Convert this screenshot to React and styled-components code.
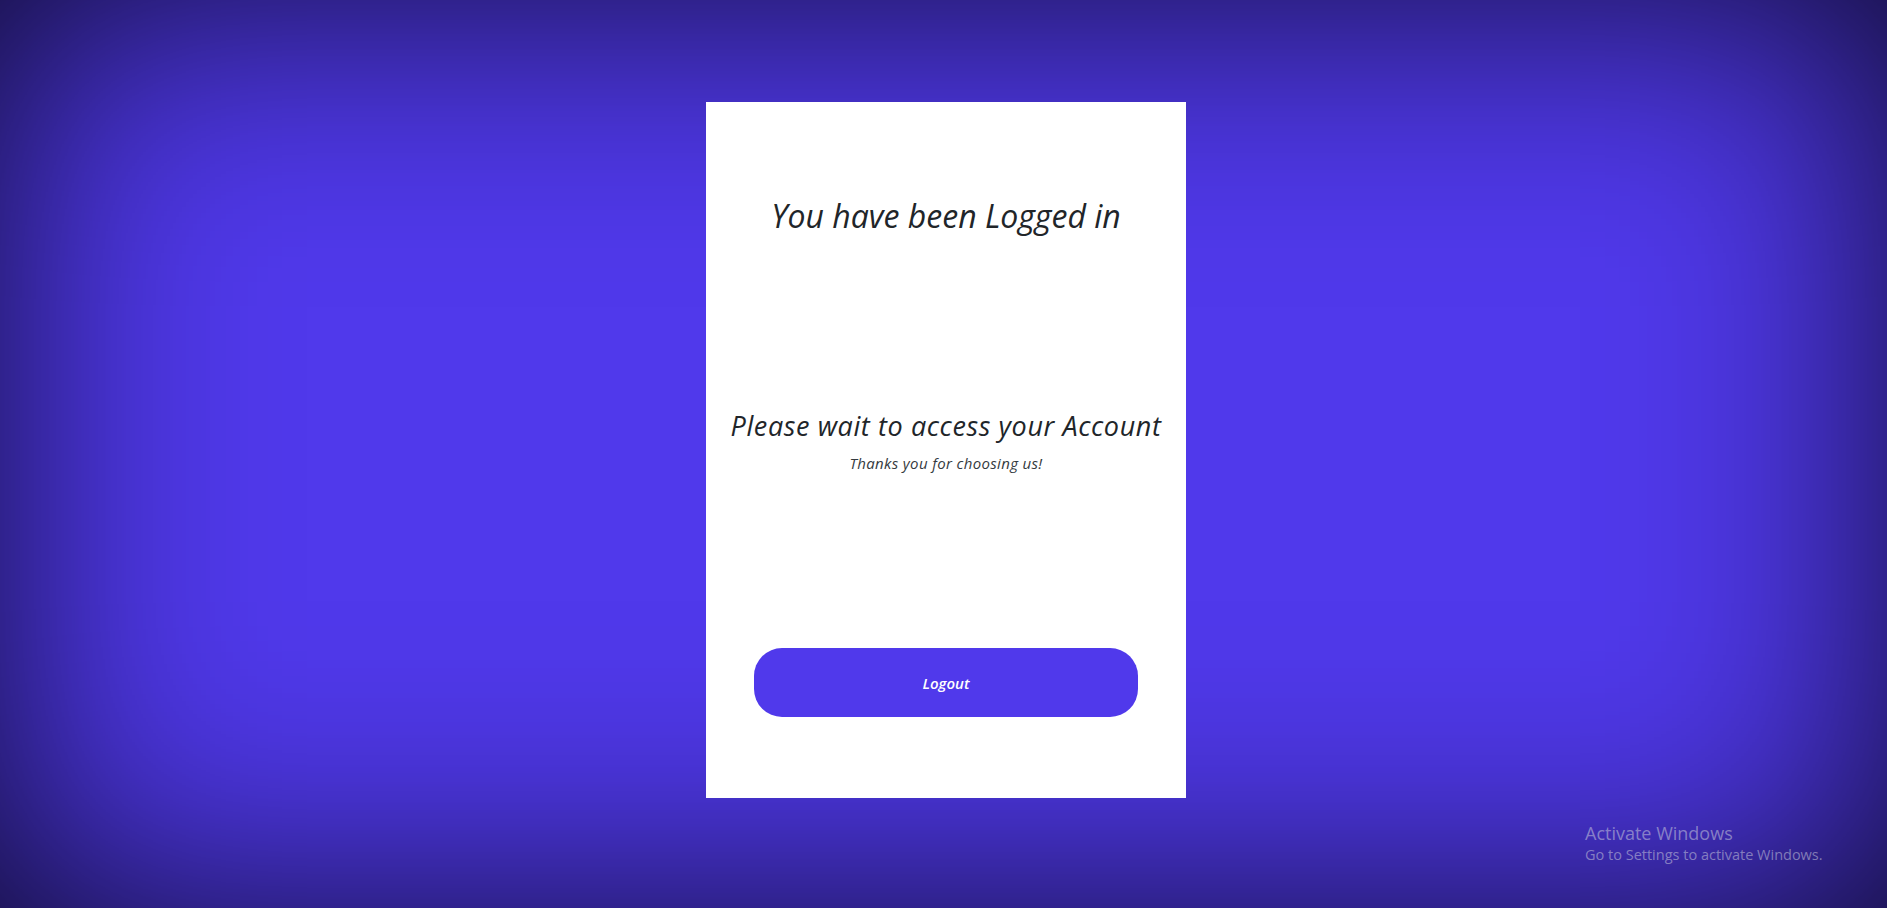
import React from "react";
import styled, { createGlobalStyle } from "styled-components";

const GlobalStyle = createGlobalStyle`
  * {
    box-sizing: border-box;
  }

  html,
  body {
    margin: 0;
    padding: 0;
    height: 100%;
  }

  body {
    font-family: "Open Sans", "Liberation Sans", sans-serif;
    background: #5039eb;
    overflow: hidden;
  }
`;

const Page = styled.div`
  position: relative;
  width: 100vw;
  height: 100vh;
  display: flex;
  align-items: center;
  justify-content: center;
  background: #5039eb;
  box-shadow: inset 0 0 320px rgba(0, 0, 0, 0.8);
`;

const Card = styled.div`
  width: 480px;
  height: 696px;
  margin: 0 0 8px 5px;
  background: #ffffff;
  display: flex;
  flex-direction: column;
  align-items: center;
  padding: 92px 48px 81px;
`;

const Title = styled.h1`
  margin: 0;
  font-family: "Open Sans", "Liberation Sans", sans-serif;
  font-style: italic;
  font-weight: 400;
  font-size: 32px;
  line-height: 44px;
  color: #212529;
  text-align: center;
`;

const Message = styled.div`
  margin-top: 171px;
  display: flex;
  flex-direction: column;
  align-items: center;
  gap: 10px;
`;

const Subtitle = styled.h2`
  margin: 0;
  font-family: "Open Sans", "Liberation Sans", sans-serif;
  font-style: italic;
  font-weight: 400;
  font-size: 27px;
  line-height: 34px;
  letter-spacing: 0.6px;
  color: #212529;
  white-space: nowrap;
`;

const Note = styled.p`
  margin: 0;
  font-family: "Open Sans", "Liberation Sans", sans-serif;
  font-style: italic;
  font-size: 15px;
  line-height: 20px;
  letter-spacing: 0.35px;
  color: #343a40;
`;

const LogoutButton = styled.button`
  margin-top: auto;
  width: 100%;
  height: 69px;
  border: none;
  border-radius: 28px;
  background: #5039eb;
  color: #ffffff;
  font-family: "Open Sans", "Liberation Sans", sans-serif;
  font-style: italic;
  font-weight: 600;
  font-size: 15px;
  cursor: pointer;
`;

const Watermark = styled.div`
  position: absolute;
  left: 1585px;
  top: 821px;
  font-family: "Open Sans", "Liberation Sans", sans-serif;
  color: rgba(200, 200, 220, 0.55);
`;

const WatermarkTitle = styled.div`
  font-size: 18px;
  line-height: 24px;
`;

const WatermarkText = styled.div`
  font-size: 14.5px;
  line-height: 20px;
`;

export default function App() {
  return (
    <>
      <GlobalStyle />
      <Page>
        <Card>
          <Title>You have been Logged in</Title>
          <Message>
            <Subtitle>Please wait to access your Account</Subtitle>
            <Note>Thanks you for choosing us!</Note>
          </Message>
          <LogoutButton>Logout</LogoutButton>
        </Card>
        <Watermark>
          <WatermarkTitle>Activate Windows</WatermarkTitle>
          <WatermarkText>Go to Settings to activate Windows.</WatermarkText>
        </Watermark>
      </Page>
    </>
  );
}
